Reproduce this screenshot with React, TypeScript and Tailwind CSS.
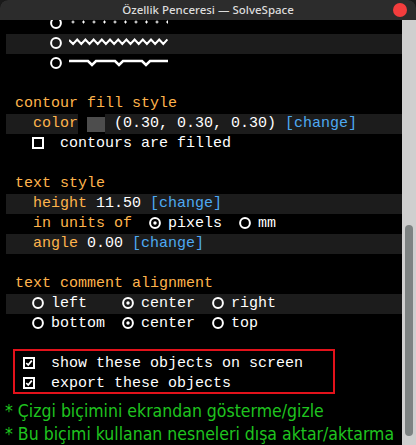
import React from "react";

const ORANGE = "text-[#ffb44c]";
const BLUE = "text-[#4ea9f2]";

function Radio({ on }: { on?: boolean }) {
  return (
    <span className="inline-block w-[9px] h-[20px] align-top">
      <svg width="12" height="12" viewBox="0 0 12 12" className="block mt-[3px] ml-[-1px] overflow-visible">
        <circle cx="6" cy="6" r="4.9" fill="none" stroke="white" strokeWidth="2" />
        {on && <circle cx="6" cy="6" r="1.7" fill="white" />}
      </svg>
    </span>
  );
}

function Check({ on }: { on?: boolean }) {
  return (
    <span className="inline-block w-[9px] h-[20px] align-top">
      <svg width="12" height="12" viewBox="0 0 12 12" className="block mt-[3px] ml-[-1px] overflow-visible">
        <rect x="1" y="1" width="10" height="10" fill="none" stroke="white" strokeWidth="2" />
        {on && <path d="M3.3 6 L5.2 8 L8.8 3.6" fill="none" stroke="white" strokeWidth="1.7" />}
      </svg>
    </span>
  );
}

function Row({ bg, children }: { bg?: boolean; children?: React.ReactNode }) {
  return (
    <div className={bg ? "h-[20px] leading-[20px] whitespace-pre bg-[#1c1c1c]" : "h-[20px] leading-[20px] whitespace-pre"}>
      {children}
    </div>
  );
}

function Dotted() {
  const dots = [];
  for (let i = 0; i < 10; i++) {
    const x = 4 + i * 10.5;
    dots.push(
      <g key={i} fill="white">
        <rect x={x - 0.5} y={6.5} width={1} height={3} />
        <rect x={x - 1.5} y={7.5} width={3} height={1} />
      </g>
    );
  }
  return (
    <svg width="99" height="20" className="inline-block align-top">
      {dots}
    </svg>
  );
}

function Zigzag() {
  let d = "M0 6";
  for (let x = 0; x < 96; x += 8.2) {
    d += ` L${(x + 4.1).toFixed(1)} 10 L${(x + 8.2).toFixed(1)} 5.5`;
  }
  return (
    <svg width="99" height="20" className="inline-block align-top">
      <path d={d} fill="none" stroke="white" strokeWidth="2" strokeLinejoin="miter" />
    </svg>
  );
}

function DashV() {
  return (
    <svg width="99" height="20" className="inline-block align-top">
      <path
        d="M0 7 H19 L23 11 L27 7 H46 L50 11 L54 7 H73 L77 11 L81 7 H99"
        fill="none"
        stroke="white"
        strokeWidth="2.5"
      />
    </svg>
  );
}

export default function App() {
  return (
    <div className="w-[416px] h-[445px] bg-[#1a1a1a] overflow-hidden">
      <div className="relative w-[416px] h-[445px] bg-black rounded-t-[8px] overflow-hidden">
        <div className="h-[20px] bg-[#2c2c2c] flex items-center justify-center relative">
          <span className="text-[11.5px] font-medium text-[#dcdcdc] font-['Noto_Sans',sans-serif] leading-none">
            Özellik Penceresi — SolveSpace
          </span>
          <span className="absolute right-[9px] top-[3px] w-[14px] h-[14px] rounded-full bg-[#f43d3d]" />
        </div>
        <div className="flex h-[425px]">
          <div className="w-[402px] overflow-hidden text-white text-[15px] font-['Liberation_Mono',monospace]">
            <div className="mt-[-6px] ml-[6px]">
              <Row>
                {"     "}
                <Radio />
                {" "}
                <Dotted />
              </Row>
              <Row bg>
                {"     "}
                <Radio />
                {" "}
                <Zigzag />
              </Row>
              <Row>
                {"     "}
                <Radio />
                {" "}
                <DashV />
              </Row>
              <Row />
              <Row>
                <span className={ORANGE}>{" contour fill style"}</span>
              </Row>
              <Row bg>
                <span className={ORANGE}>{"   color"}</span>
                <span className="inline-block w-[9px] h-[20px] align-top bg-black" />
                <span className="inline-block w-[18px] h-[20px] align-top bg-black">
                  <span className="block mt-[3px] w-[18px] h-[15px] bg-[#4d4d4d]" />
                </span>
                {" (0.30, 0.30, 0.30) "}
                <span className={BLUE}>[change]</span>
              </Row>
              <Row>
                {"   "}
                <Check />
                {"  contours are filled"}
              </Row>
              <Row />
              <Row>
                <span className={ORANGE}>{" text style"}</span>
              </Row>
              <Row bg>
                <span className={ORANGE}>{"   height "}</span>
                {"11.50 "}
                <span className={BLUE}>[change]</span>
              </Row>
              <Row>
                <span className={ORANGE}>{"   in units of  "}</span>
                <Radio on />
                {" pixels  "}
                <Radio />
                {" mm"}
              </Row>
              <Row bg>
                <span className={ORANGE}>{"   angle "}</span>
                {"0.00 "}
                <span className={BLUE}>[change]</span>
              </Row>
              <Row />
              <Row>
                <span className={ORANGE}>{" text comment alignment"}</span>
              </Row>
              <Row bg>
                {"   "}
                <Radio />
                {" left    "}
                <Radio on />
                {" center  "}
                <Radio />
                {" right"}
              </Row>
              <Row>
                {"   "}
                <Radio />
                {" bottom  "}
                <Radio on />
                {" center  "}
                <Radio />
                {" top"}
              </Row>
              <Row />
              <Row>
                {"  "}
                <Check on />
                {"  show these objects on screen"}
              </Row>
              <Row>
                {"  "}
                <Check on />
                {"  export these objects"}
              </Row>
            </div>
            <div className="pl-[5px] pt-[6px] text-[17.5px] text-[#1fc41f] font-['DejaVu_Sans_Condensed','Liberation_Sans_Narrow',sans-serif] whitespace-pre">
              <div className="h-[23px] leading-[23px]">* Çizgi biçimini ekrandan gösterme/gizle</div>
              <div className="h-[23px] leading-[23px]">* Bu biçimi kullanan nesneleri dışa aktar/aktarma</div>
            </div>
          </div>
          <div className="w-[14px] h-[425px] bg-[#cfcfcf] pt-[205px] pl-[3px]">
            <div className="w-[8px] h-[211px] rounded-full bg-[#7d8282]" />
          </div>
        </div>
        <div className="absolute left-[13px] top-[349px] w-[322px] h-[45px] border-2 border-[#e3121b]" />
      </div>
    </div>
  );
}
